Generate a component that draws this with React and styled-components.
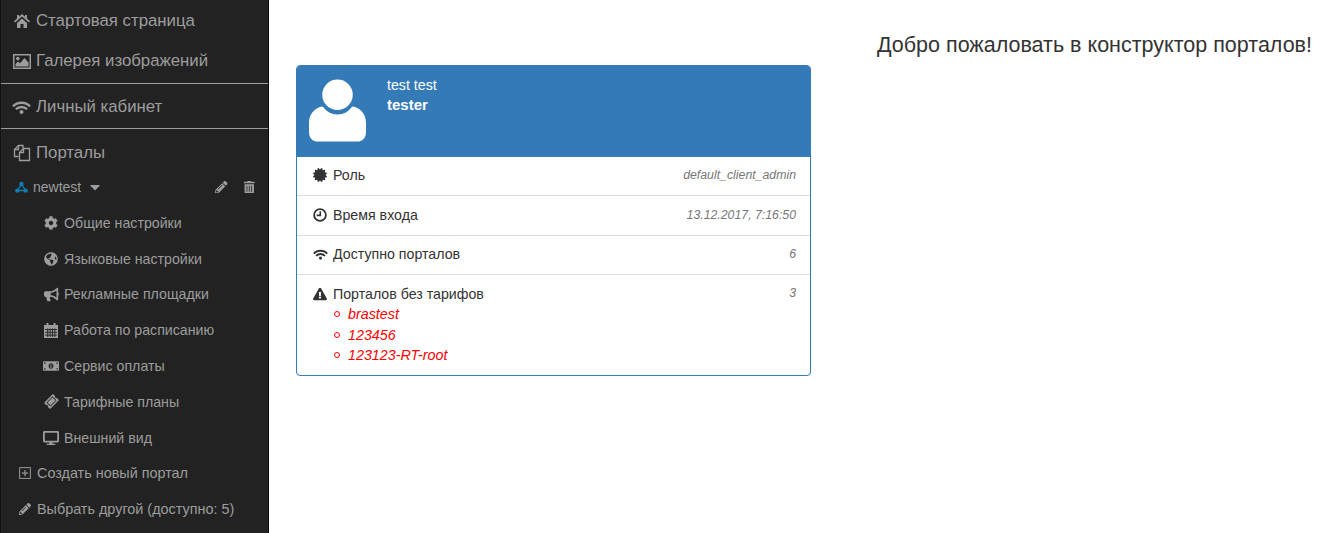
import React from 'react';
import styled, { createGlobalStyle } from 'styled-components';
import {
    FaCog, FaGlobeAmericas, FaBullhorn, FaMoneyBillAlt, FaTicketAlt, FaDesktop,
    FaPencilAlt, FaTrashAlt, FaCertificate, FaExclamationTriangle, FaCaretDown
} from 'react-icons/fa';
import { BsPlusSquare } from 'react-icons/bs';

const GlobalStyle = createGlobalStyle`
    html, body {
        margin: 0;
        padding: 0;
        background: #ffffff;
        font-family: "Liberation Sans", Arial, sans-serif;
        color: #333333;
    }
`

// * ---------- LAYOUT ---------- *
const Page = styled.div`
    display: flex;
    width: 1324px;
    height: 533px;
    overflow: hidden;
`
const Sidebar = styled.nav`
    width: 267px;
    flex-shrink: 0;
    background: #222222;
    border-left: 1px solid #111111;
    border-right: 1px solid #080808;
    color: #9d9d9d;
    display: flex;
    flex-direction: column;
`
const Main = styled.main`
    flex: 1;
    display: flex;
    justify-content: space-between;
    align-items: flex-start;
    padding: 33px 12px 0 27px;
`
const Divider = styled.div`
    height: 1px;
    flex-shrink: 0;
    background: #9d9d9d;
    margin: ${props => props.$gap || '0'};
`

// * ---------- SIDEBAR ---------- *
const TopItem = styled.div`
    display: flex;
    align-items: center;
    box-sizing: border-box;
    height: ${props => props.$height}px;
    padding: ${props => props.$pad || 2}px 0 0 11px;
    font-size: 16.8px;
`
const TopIcon = styled.span`
    display: flex;
    justify-content: center;
    width: 19px;
    margin-right: 5px;
    svg { display: block; }
`
const PortalRow = styled.div`
    display: flex;
    align-items: center;
    height: 36px;
    padding: 0 13px 0 14px;
    font-size: 14px;
`
const PortalName = styled.span`
    margin-left: 5px;
`
const Caret = styled(FaCaretDown)`
    margin-left: 6px;
    font-size: 16px;
`
const PortalActions = styled.span`
    margin-left: auto;
    display: flex;
    gap: 15px;
    font-size: 12.5px;
`
const SubItem = styled.div`
    display: flex;
    align-items: center;
    height: 35.8px;
    padding-left: 42px;
    font-size: 14.2px;
`
const SubIcon = styled.span`
    display: flex;
    justify-content: center;
    width: 16px;
    margin-right: 5px;
    font-size: ${props => props.$size || 14}px;
`
const TiltedTicket = styled(FaTicketAlt)`
    transform: rotate(-45deg);
`
const ActionItem = styled.div`
    display: flex;
    align-items: center;
    height: 35.5px;
    padding-left: 17px;
    font-size: 14.4px;
`
const ActionIcon = styled.span`
    display: flex;
    justify-content: center;
    width: 13px;
    margin-right: 6px;
    font-size: 12px;
    svg { stroke: currentColor; stroke-width: ${props => props.$bold ? 0.6 : 0}; }
`

// * ---------- CARD ---------- *
const Card = styled.section`
    width: 515px;
    margin-top: 32px;
    box-sizing: border-box;
    border: 1px solid #337ab7;
    border-radius: 4px;
    overflow: hidden;
    font-size: 14px;
`
const CardHead = styled.header`
    display: flex;
    height: 91px;
    background: #337ab7;
    color: #ffffff;
`
const Avatar = styled.svg`
    width: 57px;
    height: 63px;
    margin: 13px 0 0 12px;
`
const HeadText = styled.div`
    margin-left: 21px;
    padding-top: 9px;
    line-height: 20px;
    font-size: 14.2px;
    strong { font-size: 15px; }
`
const Row = styled.div`
    display: flex;
    justify-content: space-between;
    align-items: ${props => props.$top ? 'flex-start' : 'center'};
    height: ${props => props.$height}px;
    padding: ${props => props.$top ? '11px 14px 0 15px' : '0 14px 2px 15px'};
    box-sizing: border-box;
    border-top: ${props => props.$first ? 'none' : '1px solid #dddddd'};
    color: #333333;
`
const RowLabel = styled.span`
    display: flex;
    align-items: center;
    line-height: 16px;
    font-size: 14.2px;
`
const RowIcon = styled.span`
    display: flex;
    justify-content: center;
    width: 16px;
    margin-right: 5px;
    font-size: 14px;
    color: #333333;
`
const RowValue = styled.em`
    font-size: 12.3px;
    color: #777777;
`
const PortalList = styled.ul`
    margin: 2px 0 0;
    padding: 0 0 0 22px;
    list-style: none;
    color: #ff0000;
    font-style: italic;
    font-size: 14.3px;
    li {
        display: flex;
        align-items: center;
        line-height: 20.5px;
    }
    li::before {
        content: '';
        box-sizing: border-box;
        width: 6px;
        height: 6px;
        margin-right: 8px;
        border: 1px solid #ff0000;
        border-radius: 50%;
    }
`
const Welcome = styled.h1`
    margin: 0;
    font-size: 21.5px;
    font-weight: 400;
    line-height: 24px;
    color: #333333;
`

// * ---------- ICONS ---------- *
const HomeIcon = () => (
    <svg width="16" height="14" viewBox="0 0 16 14" fill="currentColor">
        <path d="M8 0L16 7.3L14.9 8.6L8 2.6L1.1 8.6L0 7.3L3 4.6V1H5V2.8z" />
        <path d="M11 1H13V4.5L11 2.8z" />
        <path d="M3 9L8 4.4L13 9V14H9.5V10H6.5V14H3z" />
    </svg>
)

const PictureIcon = () => (
    <svg width="18" height="15" viewBox="0 0 18 15">
        <rect x="0.75" y="0.75" width="16.5" height="13.5" fill="none" stroke="currentColor" strokeWidth="1.5" />
        <circle cx="4.8" cy="4.6" r="1.8" fill="currentColor" />
        <path d="M2.5 12.5V10L5 7.5L7 9.3L11.5 4L15.5 8.5V12.5z" fill="currentColor" />
    </svg>
)

const WifiIcon = ({ width = 19, height = 13 }) => (
    <svg width={width} height={height} viewBox="0 0 19 13" fill="none" stroke="currentColor" strokeWidth="2.4">
        <path d="M1 5.3C5.5 0.6 13.5 0.6 18 5.3" />
        <path d="M3.9 8.2C7 5.2 12 5.2 15.1 8.2" />
        <circle cx="9.5" cy="11" r="2" fill="currentColor" stroke="none" />
    </svg>
)

const DuplicateIcon = () => (
    <svg width="18" height="18" viewBox="0 0 18 18" fill="none" stroke="currentColor" strokeWidth="1.3">
        <path d="M5.5 12.5H1.5V5.5L5.5 1.5H10V4.5" />
        <path d="M5.5 1.5V5.5H1.5" />
        <path d="M6.5 16.5V8.5L10.5 4.5H16.5V16.5z" />
        <path d="M10.5 4.5V8.5H6.5" />
    </svg>
)

const NodesIcon = () => (
    <svg width="13" height="12" viewBox="0 0 13 12">
        <path d="M6.5 3L2.5 9.5H10.5z" fill="none" stroke="#0e7fb5" strokeWidth="1.4" />
        <circle cx="6.5" cy="3" r="2.2" fill="#0e7fb5" />
        <circle cx="2.3" cy="9.6" r="2.2" fill="#0e7fb5" />
        <circle cx="10.7" cy="9.6" r="2.2" fill="#0e7fb5" />
    </svg>
)

const CalendarIcon = () => (
    <svg width="14" height="15" viewBox="0 0 14 15">
        <rect x="0" y="2" width="14" height="13" fill="currentColor" />
        <rect x="2.5" y="0" width="2" height="3.5" fill="currentColor" />
        <rect x="9.5" y="0" width="2" height="3.5" fill="currentColor" />
        <path d="M1 6.5H13M1 9.3H13M1 12.1H13M3.7 5.5V14M6.1 5.5V14M8.5 5.5V14M10.9 5.5V14" stroke="#222222" strokeWidth="0.9" fill="none" />
    </svg>
)

const ClockIcon = () => (
    <svg width="14" height="14" viewBox="0 0 14 14" fill="none" stroke="currentColor" strokeWidth="1.8">
        <circle cx="7" cy="7" r="5.9" />
        <path d="M7.3 3.2V7.4H3.6" strokeWidth="1.6" />
    </svg>
)

const subItems = [
    [<FaCog />, 'Общие настройки', 14],
    [<FaGlobeAmericas />, 'Языковые настройки', 14],
    [<FaBullhorn />, 'Рекламные площадки', 15],
    [<CalendarIcon />, 'Работа по расписанию', 14],
    [<FaMoneyBillAlt />, 'Сервис оплаты', 16],
    [<TiltedTicket />, 'Тарифные планы', 13],
    [<FaDesktop />, 'Внешний вид', 16],
];

const App = () => (
    <Page>
        <GlobalStyle />
        <Sidebar>
            <TopItem $height={40}><TopIcon><HomeIcon /></TopIcon>Стартовая страница</TopItem>
            <TopItem $height={40}><TopIcon><PictureIcon /></TopIcon>Галерея изображений</TopItem>
            <Divider $gap="3px 0 0" />
            <TopItem $height={44}><TopIcon><WifiIcon /></TopIcon>Личный кабинет</TopItem>
            <Divider />
            <TopItem $height={40} $pad={8}><TopIcon><DuplicateIcon /></TopIcon>Порталы</TopItem>
            <PortalRow>
                <NodesIcon />
                <PortalName>newtest</PortalName>
                <Caret />
                <PortalActions><FaPencilAlt /><FaTrashAlt /></PortalActions>
            </PortalRow>
            {subItems.map(([icon, label, size]) => (
                <SubItem key={label}><SubIcon $size={size}>{icon}</SubIcon>{label}</SubItem>
            ))}
            <ActionItem><ActionIcon $bold><BsPlusSquare /></ActionIcon>Создать новый портал</ActionItem>
            <ActionItem><ActionIcon><FaPencilAlt /></ActionIcon>Выбрать другой (доступно: 5)</ActionItem>
        </Sidebar>
        <Main>
            <Card>
                <CardHead>
                    <Avatar viewBox="0 0 58 63">
                        <circle cx="29" cy="15.5" r="15.5" fill="#ffffff" />
                        <path d="M14 27.5A18 18 0 0 0 44 27.5C52 28.5 58 35 58 44V53C58 59 55 63 49 63H9C3 63 0 59 0 53V44C0 35 6 28.5 14 27.5z" fill="#ffffff" />
                    </Avatar>
                    <HeadText>
                        <div>test test</div>
                        <strong>tester</strong>
                    </HeadText>
                </CardHead>
                <Row $first $height={38}>
                    <RowLabel><RowIcon><FaCertificate /></RowIcon>Роль</RowLabel>
                    <RowValue>default_client_admin</RowValue>
                </Row>
                <Row $height={40}>
                    <RowLabel><RowIcon><ClockIcon /></RowIcon>Время входа</RowLabel>
                    <RowValue>13.12.2017, 7:16:50</RowValue>
                </Row>
                <Row $height={39}>
                    <RowLabel><RowIcon><WifiIcon width={15} height={11} /></RowIcon>Доступно порталов</RowLabel>
                    <RowValue>6</RowValue>
                </Row>
                <Row $top $height={101}>
                    <div>
                        <RowLabel><RowIcon><FaExclamationTriangle /></RowIcon>Порталов без тарифов</RowLabel>
                        <PortalList>
                            <li>brastest</li>
                            <li>123456</li>
                            <li>123123-RT-root</li>
                        </PortalList>
                    </div>
                    <RowValue>3</RowValue>
                </Row>
            </Card>
            <Welcome>Добро пожаловать в конструктор порталов!</Welcome>
        </Main>
    </Page>
);

export default App;
